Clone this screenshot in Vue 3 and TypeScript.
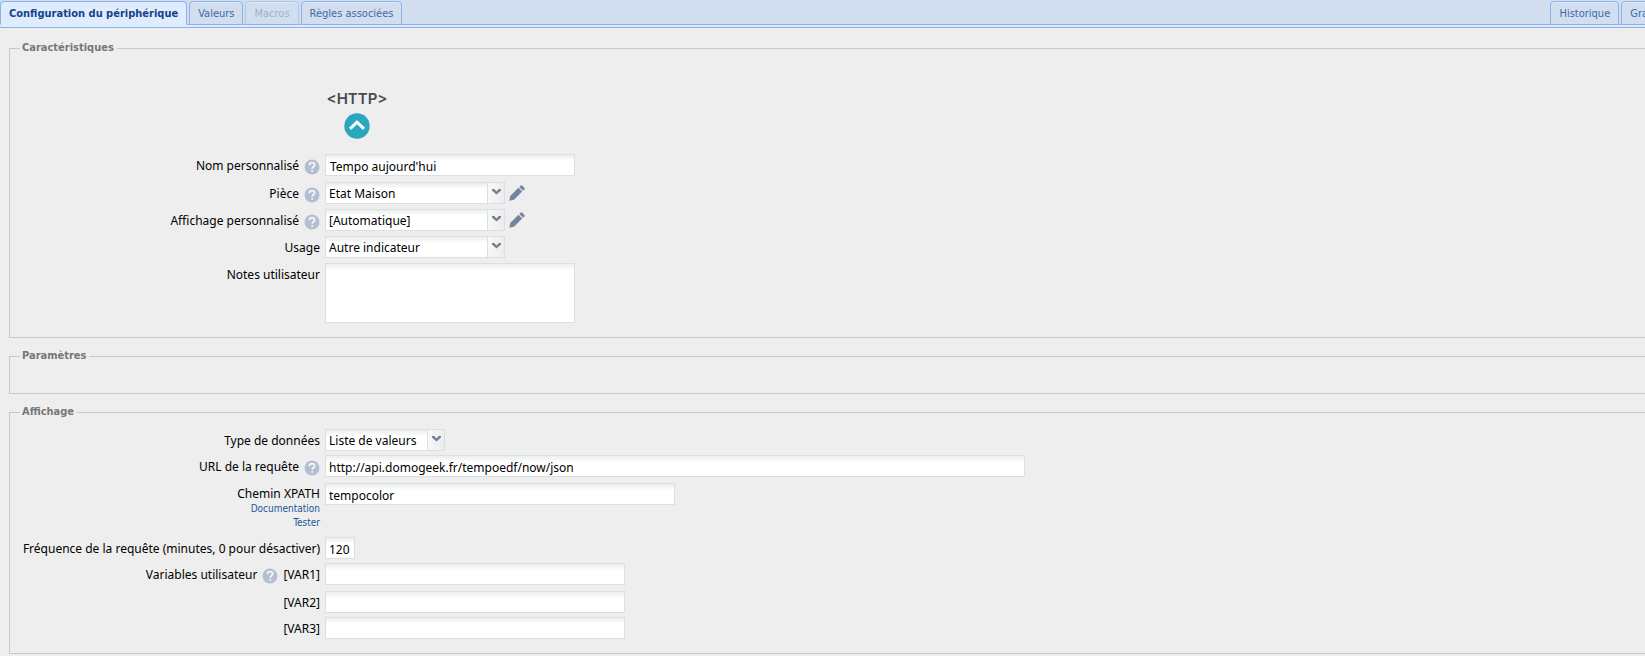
<script setup lang="ts">
import { ref } from 'vue'

interface Tab {
  label: string
  active?: boolean
  disabled?: boolean
}

interface Combo {
  id: string
  label: string
  value: string
  help: boolean
  edit: boolean
}

const leftTabs: Tab[] = [
  { label: 'Configuration du périphérique', active: true },
  { label: 'Valeurs' },
  { label: 'Macros', disabled: true },
  { label: 'Règles associées' },
]
const rightTabs: Tab[] = [{ label: 'Historique' }, { label: 'Graphique' }]

const combos = ref<Combo[]>([
  { id: 'piece', label: 'Pièce', value: 'Etat Maison', help: true, edit: true },
  { id: 'affichage', label: 'Affichage personnalisé', value: '[Automatique]', help: true, edit: true },
  { id: 'usage', label: 'Usage', value: 'Autre indicateur', help: false, edit: false },
])

const customName = ref("Tempo aujourd'hui")
const notes = ref('')
const dataType = ref('Liste de valeurs')
const url = ref('http://api.domogeek.fr/tempoedf/now/json')
const xpath = ref('tempocolor')
const frequency = ref('120')
const variables = ref(['', '', ''])
</script>

<template>
  <div class="page">
    <nav class="tabs">
      <button
        v-for="t in leftTabs"
        :key="t.label"
        type="button"
        class="tab"
        :class="{ active: t.active }"
        :disabled="t.disabled"
      >{{ t.label }}</button>
      <span class="spring"></span>
      <button v-for="t in rightTabs" :key="t.label" type="button" class="tab">{{ t.label }}</button>
    </nav>
    <div class="strip"></div>

    <svg class="defs" aria-hidden="true">
      <symbol id="help" viewBox="0 0 16 16">
        <circle cx="8" cy="8" r="7.5" fill="#b3bfd1" />
        <path d="M5.4 6.2C5.4 4.5 6.5 3.7 8 3.7s2.6.9 2.6 2.2c0 1.9-2.4 1.9-2.4 3.9" fill="none" stroke="#f4f6f9" stroke-width="1.8" />
        <rect x="7.3" y="11" width="1.8" height="1.8" fill="#f4f6f9" />
      </symbol>
      <symbol id="pencil" viewBox="0 0 16 16">
        <path d="M0.3 15.7 1.2 11 9.4 2.8 13.2 6.6 5 14.8Z" fill="#7484a3" />
        <path d="M10.3 2 11.8 0.5Q12.4 0 13 0.5L15.5 3Q16 3.6 15.5 4.2L14 5.7Z" fill="#7484a3" />
      </symbol>
      <symbol id="arrow" viewBox="0 0 9 6">
        <path d="M0 0H2.2L4.5 2.6 6.8 0H9V1.4L4.5 5.6 0 1.4Z" fill="#6f8099" />
      </symbol>
    </svg>

    <main class="content">
      <fieldset class="group features">
        <legend>Caractéristiques</legend>
        <div class="row logo-row">
          <div class="logo">
            <span class="logo-text">&lt;HTTP&gt;</span>
            <svg class="logo-mark" viewBox="0 0 26 26" aria-hidden="true">
              <circle cx="13" cy="13" r="12.7" fill="#2aa7bd" />
              <path d="M6 15.8 13 9.2 20 15.8" fill="none" stroke="#eefafc" stroke-width="3.2" />
            </svg>
          </div>
        </div>
        <div class="row helped">
          <div class="caption">
            <label for="name">Nom personnalisé</label>
            <svg class="help"><use href="#help" /></svg>
          </div>
          <input id="name" v-model="customName" class="field w250 roomy" type="text" />
        </div>
        <div v-for="c in combos" :key="c.id" class="row combo-row">
          <div class="caption">
            <label :for="c.id">{{ c.label }}</label>
            <svg v-if="c.help" class="help"><use href="#help" /></svg>
          </div>
          <div class="combo w180">
            <select :id="c.id" v-model="c.value" class="field">
              <option>{{ c.value }}</option>
            </select>
            <span class="trigger"><svg><use href="#arrow" /></svg></span>
          </div>
          <button v-if="c.edit" type="button" class="edit" :aria-label="'Modifier ' + c.label">
            <svg><use href="#pencil" /></svg>
          </button>
        </div>
        <div class="row">
          <div class="caption"><label for="notes">Notes utilisateur</label></div>
          <textarea id="notes" v-model="notes" class="field w250"></textarea>
        </div>
      </fieldset>

      <fieldset class="group params">
        <legend>Paramètres</legend>
      </fieldset>

      <fieldset class="group display">
        <legend>Affichage</legend>
        <div class="row">
          <div class="caption"><label for="type">Type de données</label></div>
          <div class="combo w120">
            <select id="type" v-model="dataType" class="field">
              <option>Liste de valeurs</option>
            </select>
            <span class="trigger"><svg><use href="#arrow" /></svg></span>
          </div>
        </div>
        <div class="row helped">
          <div class="caption">
            <label for="url">URL de la requête</label>
            <svg class="help"><use href="#help" /></svg>
          </div>
          <input id="url" v-model="url" class="field w700" type="text" />
        </div>
        <div class="row xpath">
          <div class="caption stacked">
            <label for="xpath">Chemin XPATH</label>
            <a href="#documentation">Documentation</a>
            <a href="#tester">Tester</a>
          </div>
          <input id="xpath" v-model="xpath" class="field w350" type="text" />
        </div>
        <div class="row">
          <div class="caption"><label for="freq">Fréquence de la requête (minutes, 0 pour désactiver)</label></div>
          <input id="freq" v-model="frequency" class="field w30" type="text" />
        </div>
        <div v-for="(v, i) in variables" :key="i" class="row" :class="{ helped: i === 0 }">
          <div class="caption">
            <template v-if="i === 0">
              <span>Variables utilisateur</span>
              <svg class="help"><use href="#help" /></svg>
            </template>
            <label :for="'var' + i">[VAR{{ i + 1 }}]</label>
          </div>
          <input :id="'var' + i" v-model="variables[i]" class="field w300" type="text" />
        </div>
      </fieldset>
    </main>
  </div>
</template>

<style>
body {
  margin: 0;
  background: #eeeeee;
}
</style>

<style scoped>
.page {
  min-height: 100vh;
  overflow: hidden;
  color: #000;
  font: 12px/22px Tahoma, "Noto Sans", sans-serif;
}
.page * {
  box-sizing: border-box;
}
.defs {
  display: none;
}
.tabs {
  display: flex;
  gap: 2px;
  height: 25px;
  margin-right: -46px;
  padding-top: 1px;
  background: #d0deef;
  box-shadow: inset 0 -1px #8db2e3;
}
.spring {
  flex: 1;
}
.tab {
  height: 24px;
  padding: 1px 8px 0;
  border: 1px solid #8db2e3;
  border-radius: 4px 4px 0 0;
  background: #d0deef;
  box-shadow: inset 0 1px #dfeafa;
  color: #416aa3;
  font: 11px/21px Tahoma, "DejaVu Sans Condensed", "DejaVu Sans", sans-serif;
  white-space: nowrap;
}
.tab.active {
  border-bottom-color: #deecfd;
  background: #deecfd;
  color: #15428b;
  font-weight: bold;
}
.tab:disabled {
  border-color: #b1c9e8;
  border-bottom-color: #8db2e3;
  color: #a3b0c0;
}
.strip {
  height: 3px;
  border-bottom: 1px solid #8db2e3;
  background: #deecfd;
}
.content {
  display: flex;
  flex-direction: column;
  gap: 10px;
  margin-right: -12px;
  padding: 12px 0 0 9px;
}
.group {
  min-width: 0;
  margin: 0;
  padding: 0 10px;
  border: 1px solid #c8c8c8;
}
.group legend {
  padding: 0 3px 0 2px;
  color: #777;
  font: bold 11px/16px Tahoma, "DejaVu Sans Condensed", "DejaVu Sans", sans-serif;
}
.features {
  padding-bottom: 14px;
}
.params {
  height: 46px;
}
.display {
  padding-top: 9px;
  padding-bottom: 10px;
}
.row {
  display: flex;
  align-items: flex-start;
  min-height: 26px;
}
.row.helped {
  min-height: 28px;
}
.row.combo-row {
  min-height: 27px;
}
.row.xpath {
  min-height: 54px;
}
.caption {
  display: flex;
  justify-content: flex-end;
  gap: 5px;
  width: 300px;
  margin-right: 5px;
  padding-top: 1px;
  white-space: nowrap;
}
.stacked {
  flex-direction: column;
  align-items: flex-end;
  gap: 0;
  padding-top: 3px;
  line-height: 16px;
}
.stacked a {
  color: #225599;
  font: 10px/14px Tahoma, "DejaVu Sans Condensed", "DejaVu Sans", sans-serif;
  text-decoration: none;
}
.help {
  width: 16px;
  height: 16px;
  margin-top: 4px;
}
.field {
  height: 22px;
  margin: 0;
  padding: 2px 3px 0;
  border: 1px solid #dcdfdf;
  border-radius: 0;
  outline: none;
  background: linear-gradient(#e9eeee, #fff 6px);
  color: #000;
  font: inherit;
  line-height: 18px;
}
.field.roomy {
  padding-left: 4px;
}
select.field {
  appearance: none;
  width: 100%;
}
textarea.field {
  height: 60px;
  resize: none;
}
.combo {
  display: grid;
}
.combo > * {
  grid-area: 1 / 1;
}
.trigger {
  display: flex;
  justify-content: center;
  justify-self: end;
  width: 18px;
  height: 22px;
  padding-top: 6px;
  border: 1px solid #dcdfdf;
  background: linear-gradient(90deg, #f8f8f8, #ececec);
  pointer-events: none;
}
.trigger svg {
  width: 9px;
  height: 6px;
}
.edit {
  width: 16px;
  height: 16px;
  margin: 3px 0 0 4px;
  padding: 0;
  border: 0;
  background: none;
}
.edit svg {
  display: block;
  width: 16px;
  height: 16px;
}
.logo-row {
  height: 98px;
  padding: 33px 0 0 305px;
}
.logo {
  display: flex;
  flex-direction: column;
  align-items: center;
  width: 64px;
}
.logo-text {
  color: #4a4a4a;
  font: 600 15px/20px Inter, "Open Sans", sans-serif;
}
.logo-mark {
  width: 26px;
  height: 26px;
  margin-top: 4px;
}
.w30 { width: 30px; }
.w120 { width: 120px; }
.w180 { width: 180px; }
.w250 { width: 250px; }
.w300 { width: 300px; }
.w350 { width: 350px; }
.w700 { width: 700px; }
</style>
